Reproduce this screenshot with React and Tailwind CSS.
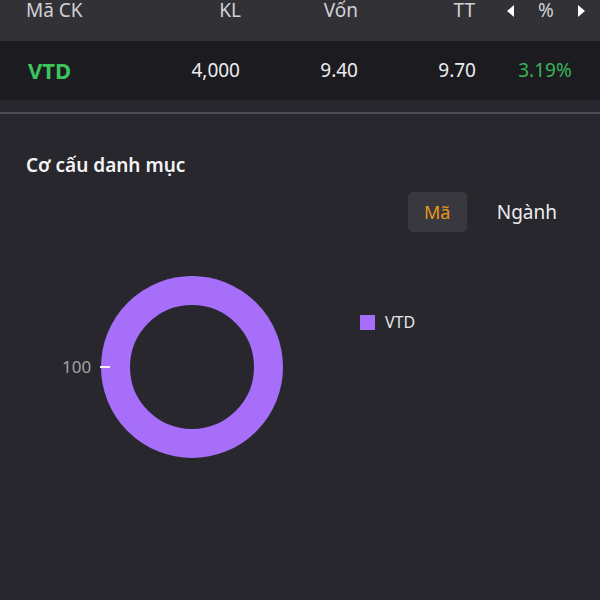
import React from 'react';

const columns = [
  { key: 'kl', label: 'KL', width: 'w-[95px]' },
  { key: 'von', label: 'Vốn', width: 'w-[117px]' },
  { key: 'tt', label: 'TT', width: 'w-[117px]' },
];

const holdings = [{ code: 'VTD', kl: '4,000', von: '9.40', tt: '9.70', pct: '3.19%' }];

// donut for portfolio share, one slice only
const Donut = () => (
  <svg width="200" height="200" viewBox="0 0 200 200">
    <circle cx="100" cy="100" r="76.5" fill="none" stroke="#a66ef9" strokeWidth="29" />
  </svg>
);

const App = () => {
  return (
    <div
      className="w-[600px] h-[600px] overflow-hidden bg-[#28272d] text-white"
      style={{ fontFamily: '"Noto Sans", "Open Sans", sans-serif' }}
    >
      {/* table header */}
      <div className="flex items-start h-[41px] bg-[#313136] pl-[26px] pt-[1px] text-[19px] leading-[19px] text-[#d2d2d6]">
        <div className="w-[120px]">Mã CK</div>
        {columns.map((c) => (
          <div key={c.key} className={`${c.width} text-right`}>
            {c.label}
          </div>
        ))}
        <div className="ml-[15px] w-[110px] flex items-center justify-between pl-[17px] pr-[15px] h-[19px]">
          <span className="w-0 h-0 border-y-[6px] border-y-transparent border-r-[7px] border-r-white" />
          <span>%</span>
          <span className="w-0 h-0 border-y-[6px] border-y-transparent border-l-[7px] border-l-white" />
        </div>
      </div>

      {/* rows */}
      {holdings.map((h) => (
        <div key={h.code} className="flex items-center h-[59px] bg-[#1c1c20] pl-[28px] text-[19px] text-[#ececef]">
          <div className="w-[118px] text-[22px] font-bold text-[#3cc45e]">{h.code}</div>
          <div className="w-[94px] text-right">{h.kl}</div>
          <div className="w-[118px] text-right">{h.von}</div>
          <div className="w-[118px] text-right">{h.tt}</div>
          <div className="ml-[14px] w-[110px] text-center text-[#36b258]">{h.pct}</div>
        </div>
      ))}

      <div className="h-[12px]" />
      <div className="h-[2px] bg-[#4d4c52]" />

      {/* portfolio structure */}
      <div className="px-[26px] pt-[38px]">
        <h2 className="text-[19px] font-semibold leading-[26px] text-[#f4f4f6]">Cơ cấu danh mục</h2>

        <div className="flex justify-end gap-[30px] mt-[14px] mr-[17px]">
          <button className="w-[59px] h-[40px] rounded-[5px] bg-[#38383e] text-[18px] text-[#e8951c]">Mã</button>
          <button className="h-[40px] text-[19px] text-[#ececef]">Ngành</button>
        </div>

        <div className="flex mt-[35px]">
          <div className="flex items-center w-[276px] pl-[36px]">
            <span className="w-[38px] text-[17px] text-[#a3a2a8]">100</span>
            <span className="relative z-10 w-[10px] h-[2px] bg-[#f4eaf4]" />
            <div className="-ml-[18px]">
              <Donut />
            </div>
          </div>
          <div className="flex items-start gap-[10px] ml-[58px] pt-[46px]">
            <span className="w-[15px] h-[15px] mt-[2px] bg-[#a66ef9]" />
            <span className="text-[16px] leading-[19px] text-[#e6e6ea]">VTD</span>
          </div>
        </div>
      </div>
    </div>
  );
};

export default App;
